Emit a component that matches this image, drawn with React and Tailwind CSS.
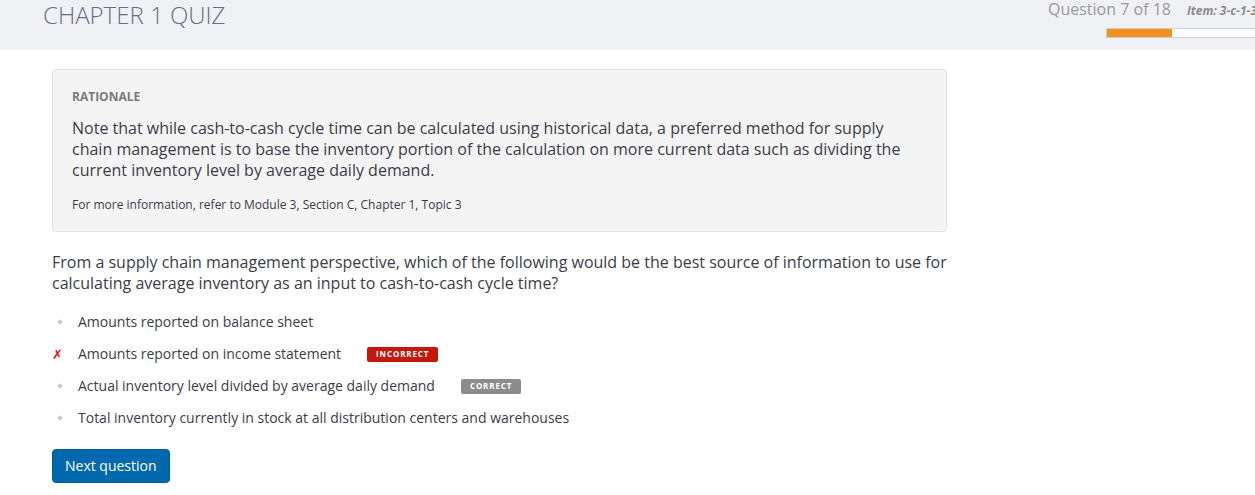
import React from 'react'

const options = [
  { text: 'Amounts reported on balance sheet' },
  { text: 'Amounts reported on income statement', picked: true, badge: 'incorrect' },
  { text: 'Actual inventory level divided by average daily demand', badge: 'correct' },
  { text: 'Total inventory currently in stock at all distribution centers and warehouses' },
]

const Marker = ({ picked }) => {
  if (picked) {
    return <span className="text-[13px] leading-none text-[#e8101a] font-['DejaVu_Sans',sans-serif]">✗</span>
  }
  return <span className="ml-[6px] w-[4px] h-[4px] rotate-45 bg-[#c9c9c9]" />
}

const Badge = ({ kind }) => {
  if (kind === 'incorrect') {
    return (
      <span className="ml-[26px] h-[15px] px-[9px] flex items-center rounded-[2px] bg-[#c5170c] text-white text-[8px] font-bold tracking-[0.85px]">
        INCORRECT
      </span>
    )
  }
  return (
    <span className="ml-[26px] h-[15px] px-[9px] flex items-center rounded-[2px] bg-[#8c8c8c] text-white text-[8px] font-bold tracking-[0.85px]">
      CORRECT
    </span>
  )
}

const App = () => {
  return (
    <div className="w-[1255px] h-[495px] overflow-hidden bg-white font-['Open_Sans',sans-serif] text-[#3c3c48]">
      {/* Header */}
      <div className="h-[50px] bg-[#f0f1f5] flex pl-[43px] overflow-hidden">
        <div className="w-[1005px] shrink-0 text-[24px] leading-[30px] font-light text-[#68707f]">
          CHAPTER 1 QUIZ
        </div>
        <div className="shrink-0 flex flex-col">
          <div className="flex items-baseline whitespace-nowrap">
            <span className="text-[16px] leading-[19px] text-[#9a9a9a]">Question 7 of 18</span>
            <span className="ml-[16px] text-[12px] font-bold italic text-[#8a8a8a]">Item: 3-c-1-3</span>
          </div>
          <div className="ml-[58px] mt-[8px] w-[200px] h-[10px] border border-[#cfcfcf] bg-white">
            <div className="w-[65px] h-full bg-[#f39020]" />
          </div>
        </div>
      </div>

      <div className="pl-[52px] w-[947px]">
        {/* Rationale */}
        <div className="mt-[19px] bg-[#f4f4f4] border border-[#e2e2e2] rounded-[4px] px-[19px] pt-[19px] pb-[18px]">
          <div className="text-[12px] leading-[16px] font-bold text-[#7a7a7a]">RATIONALE</div>
          <p className="mt-[13px] text-[16px] leading-[21px]">
            Note that while cash-to-cash cycle time can be calculated using historical data, a preferred method for supply chain management is to base the inventory portion of the calculation on more current data such as dividing the current inventory level by average daily demand.
          </p>
          <p className="mt-[16px] text-[12px] leading-[16px]">
            For more information, refer to Module 3, Section C, Chapter 1, Topic 3
          </p>
        </div>

        {/* Question */}
        <p className="mt-[20px] text-[16px] leading-[21px]">
          From a supply chain management perspective, which of the following would be the best source of information to use for calculating average inventory as an input to cash-to-cash cycle time?
        </p>

        <ul className="mt-[12px]">
          {options.map((o) => (
            <li key={o.text} className="h-[32px] flex items-center">
              <span className="w-[26px] shrink-0 flex items-center">
                <Marker picked={o.picked} />
              </span>
              <span className="text-[14px] leading-[20px] whitespace-nowrap">{o.text}</span>
              {o.badge && <Badge kind={o.badge} />}
            </li>
          ))}
        </ul>

        <button className="mt-[15px] h-[34px] px-[12px] rounded-[4px] bg-[#0068ad] border border-[#005a96] text-white text-[14px] leading-[20px]">
          Next question
        </button>
      </div>
    </div>
  )
}

export default App
